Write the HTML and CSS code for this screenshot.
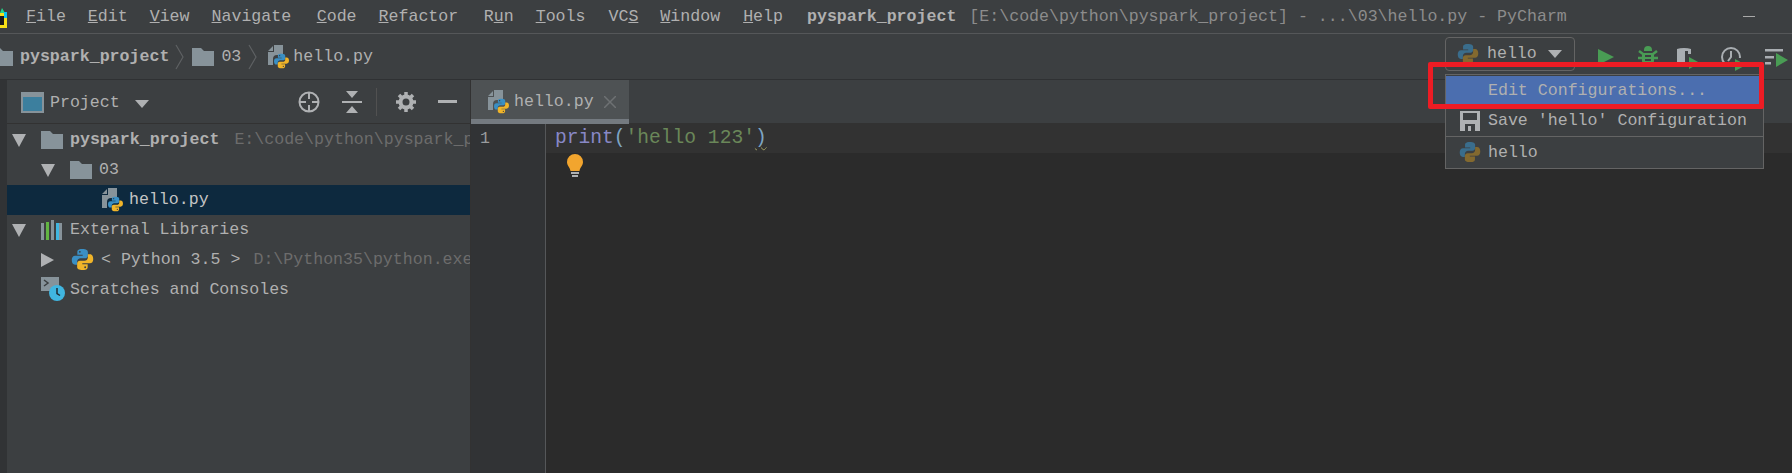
FILE: index.html
```html
<!DOCTYPE html>
<html lang="en">
<head>
<meta charset="utf-8">
<title>PyCharm</title>
<link rel="stylesheet" href="styles.css">
</head>
<body>
<svg class="defs" width="0" height="0" aria-hidden="true">
  <symbol id="py" viewBox="0 0 24 24">
    <path fill="#3a8fc4" d="M11.8 1C7 1 6.6 3 6.6 4.2V7h5.6v1H4.4C2 8 .8 9.8.8 12.6c0 3 1.300 4.800 3.400 4.800H6.400v-3.200c0-2 1.600-3.500 3.600-3.500h4.600c1.700 0 3-1.300 3-3V4.200C17.600 2.400 16 1 11.800 1z"/>
    <path fill="#f0b429" d="M12.200 23c4.800 0 5.200-2 5.200-3.200V17h-5.600v-1h7.800c2.400 0 3.600-1.800 3.600-4.600 0-3-1.300-4.800-3.400-4.800H17.600v3.200c0 2-1.600 3.500-3.600 3.500H9.400c-1.700 0-3 1.300-3 3v3.500C6.400 21.600 8 23 12.200 23z"/>
    <circle cx="9.200" cy="4" r="1" fill="#3c3f41"/><circle cx="14.800" cy="20" r="1" fill="#3c3f41"/>
  </symbol>
  <symbol id="pydim" viewBox="0 0 24 24">
    <path fill="#3a6d8c" d="M11.800 1C7 1 6.600 3 6.600 4.200V7h5.600v1H4.400C2 8 .8 9.800.8 12.600c0 3 1.300 4.800 3.400 4.800H6.400v-3.200c0-2 1.600-3.500 3.600-3.500h4.600c1.700 0 3-1.300 3-3V4.200C17.600 2.400 16 1 11.800 1z"/>
    <path fill="#83692f" d="M12.200 23c4.800 0 5.200-2 5.200-3.200V17h-5.600v-1h7.800c2.400 0 3.600-1.800 3.600-4.600 0-3-1.300-4.800-3.400-4.800H17.600v3.200c0 2-1.600 3.500-3.600 3.500H9.400c-1.700 0-3 1.300-3 3v3.500C6.400 21.600 8 23 12.200 23z"/>
  </symbol>
  <symbol id="folder" viewBox="0 0 22 18">
    <path fill="#87939a" d="M0 0h9l3 3h10v15H0z"/>
  </symbol>
  <symbol id="pyfile" viewBox="0 0 22 24">
    <path fill="#87939a" d="M6 0h9v10H9a4 4 0 0 0-4 4v6H0V7h6zM5 1v5H0z"/>
    <use href="#py" x="5" y="8" width="17" height="16"/>
  </symbol>
</svg>

<header class="menubar">
  <svg class="applogo" width="7" height="25" viewBox="0 0 7 25"><path fill="#f7e017" d="M0 9h7v15H0z"/><path fill="#1b1b1b" d="M0 12h4v9H0z"/><path fill="#21d789" d="M2 4l3 5H0z"/><path fill="#07c3f2" d="M4 8h3v6H4z"/></svg>
  <nav class="menus">
    <span><u>F</u>ile</span>
    <span><u>E</u>dit</span>
    <span><u>V</u>iew</span>
    <span class="long"><u>N</u>avigate</span>
    <span><u>C</u>ode</span>
    <span class="long"><u>R</u>efactor</span>
    <span>R<u>u</u>n</span>
    <span class="mid"><u>T</u>ools</span>
    <span>VC<u>S</u></span>
    <span class="mid"><u>W</u>indow</span>
    <span class="mid"><u>H</u>elp</span>
  </nav>
  <div class="title"><b>pyspark_project</b><span class="path">[E:\code\python\pyspark_project] - ...\03\hello.py - PyCharm</span></div>
  <i class="winmin"></i>
</header>

<div class="navbar">
  <div class="crumbs">
    <svg class="c-folder0" width="13" height="18"><use href="#folder" x="-9" width="22" height="18"/></svg>
    <b>pyspark_project</b>
    <svg class="chev" width="9" height="26" viewBox="0 0 9 26"><path fill="none" stroke="#5e6163" stroke-width="1.200" d="M1 1l7 12-7 12"/></svg>
    <svg width="22" height="18"><use href="#folder"/></svg>
    <span>03</span>
    <svg class="chev" width="9" height="26" viewBox="0 0 9 26"><path fill="none" stroke="#5e6163" stroke-width="1.200" d="M1 1l7 12-7 12"/></svg>
    <svg class="c-file" width="22" height="24"><use href="#pyfile"/></svg>
    <span>hello.py</span>
  </div>
  <div class="tools">
    <div class="runconfig">
      <svg width="22" height="22"><use href="#pydim"/></svg>
      <span>hello</span>
      <i class="tri-down"></i>
    </div>
    <svg class="t-run" width="16" height="16" viewBox="0 0 16 16"><path fill="#499c54" d="M0 0l16 8-16 8z"/></svg>
    <svg class="t-bug" width="20" height="22" viewBox="0 0 20 22"><path fill="none" stroke="#499c54" stroke-width="2.500" d="M1 5l4 3M19 5l-4 3M0 12h4M20 12h-4M2 20l3-3M18 20l-3-3"/><path fill="#499c54" d="M6 4a4 4 0 0 1 8 0v1H6zM4 7h12v8a6 6 0 0 1-12 0z"/><path fill="#3c3f41" d="M7 9h6v2H7zM7 13h6v2H7z"/></svg>
    <svg class="t-cov" width="24" height="26" viewBox="0 0 24 26"><path fill="#a9aeb2" d="M1 3a9 3 0 0 1 14 0v5h-3V5H9v13l-3 3-5-3z"/><path fill="#499c54" d="M13 11l11 6-11 6z"/></svg>
    <svg class="t-prof" width="26" height="26" viewBox="0 0 26 26"><circle cx="10" cy="11" r="9" fill="none" stroke="#a9aeb2" stroke-width="2"/><path fill="none" stroke="#a9aeb2" stroke-width="2" d="M10 5v6l-3 4"/><path fill="#3c3f41" d="M12 12h14v14H12z"/><path fill="#499c54" d="M14 13l11 6-11 6z"/></svg>
    <svg class="t-conc" width="23" height="20" viewBox="0 0 23 20"><path fill="#a9aeb2" d="M0 0h18v2.500H0zM0 7h9v2.500H0zM0 13h6v2.500H0z"/><path fill="#499c54" d="M11 4l12 7-12 7z"/></svg>
  </div>
</div>

<div class="workspace">
  <aside class="strip"></aside>
  <section class="project">
    <div class="phead">
      <svg class="p-icon" width="23" height="21" viewBox="0 0 23 21"><path fill="#87939a" d="M0 0h23v21H0z"/><path fill="#3c7f9e" d="M2 5h19v14H2z"/></svg>
      <span class="plabel">Project</span>
      <i class="tri-down"></i>
      <div class="phead-icons">
        <svg width="22" height="22" viewBox="0 0 22 22"><circle cx="11" cy="11" r="9.500" fill="none" stroke="#afb1b3" stroke-width="2"/><path stroke="#afb1b3" stroke-width="2" d="M11 1v7M11 14v7M1 11h7M14 11h7"/></svg>
        <svg class="collapse" width="20" height="22" viewBox="0 0 20 22"><path fill="#afb1b3" d="M0 10h20v2H0zM4 0h12l-6 7zM10 15l6 7H4z"/></svg>
        <i class="vsep"></i>
        <svg class="gear" width="20" height="20" viewBox="0 0 20 20"><circle cx="10" cy="10" r="5.500" fill="none" stroke="#afb1b3" stroke-width="4"/><path stroke="#afb1b3" stroke-width="3.500" d="M10 0v4M10 16v4M0 10h4M16 10h4M3 3l3 3M14 14l3 3M17 3l-3 3M6 14l-3 3"/></svg>
        <i class="pmin"></i>
      </div>
    </div>
    <ul class="tree">
      <li class="row lv0"><i class="tw-down"></i><svg width="22" height="18"><use href="#folder"/></svg><b>pyspark_project</b><span class="dim">E:\code\python\pyspark_p</span></li>
      <li class="row lv1"><i class="tw-down"></i><svg width="22" height="18"><use href="#folder"/></svg><span class="gap8">03</span></li>
      <li class="row lv2 selected"><svg width="22" height="24"><use href="#pyfile"/></svg><span>hello.py</span></li>
      <li class="row lv0"><i class="tw-down"></i><svg class="libs" width="22" height="20" viewBox="0 0 22 20"><path fill="#87939a" d="M0 3h3v17H0zM18 3h3v17h-3z"/><path fill="#62b543" d="M5 2h3v18H5z"/><path fill="#87939a" d="M10 0h3v20h-3z"/><path fill="#40b6e0" d="M15 3h3v17h-3z"/></svg><span>External Libraries</span></li>
      <li class="row lv1"><i class="tw-right"></i><svg class="py" width="23" height="23"><use href="#py"/></svg><span class="gap8">&lt; Python 3.5 &gt;</span><span class="dim">D:\Python35\python.exe</span></li>
      <li class="row lv0"><svg class="scratch" width="24" height="24" viewBox="0 0 24 24"><path fill="#87939a" d="M0 0h18v14H0z"/><path fill="none" stroke="#3c3f41" stroke-width="1.500" d="M3 3l4 3-4 3"/><circle cx="16" cy="16" r="8" fill="#40b6e0"/><path fill="none" stroke="#1f2a30" stroke-width="1.500" d="M16 11v5.500l3 2"/></svg><span class="s-label">Scratches and Consoles</span></li>
    </ul>
  </section>
  <section class="main">
    <div class="tabs">
      <div class="tab">
        <svg width="22" height="24"><use href="#pyfile"/></svg>
        <span>hello.py</span>
        <svg class="close" width="12" height="12" viewBox="0 0 12 12"><path stroke="#6e7173" stroke-width="1.500" d="M0 0l12 12M12 0L0 12"/></svg>
      </div>
    </div>
    <div class="editor">
      <div class="gutter">1</div>
      <div class="code">
        <div class="line"><span class="fn">print</span><span class="par">(</span><span class="str">'hello 123'</span><span class="par wavy">)</span></div>
        <svg class="bulb" width="16" height="25" viewBox="0 0 16 25"><path fill="#f2a52e" d="M8 0a8 8 0 0 1 8 8c0 3.500-3 5.500-3.500 9h-9C3 13.500 0 11.500 0 8a8 8 0 0 1 8-8z"/><path fill="#afb1b3" d="M4 18h8v2H4zM5 21h6v2H5z"/></svg>
      </div>
    </div>
  </section>
</div>

<div class="popup">
  <div class="pitem active"><span>Edit Configurations...</span></div>
  <div class="pitem"><svg width="20" height="20" viewBox="0 0 20 20"><path fill="#afb1b3" d="M0 0h20v20H0z"/><path fill="#3c3f41" d="M3 2h14v7H3zM5 13h10v7H5z"/><path fill="#afb1b3" d="M8 15h3v5H8z"/></svg><span>Save 'hello' Configuration</span></div>
  <div class="pitem sep"><svg width="22" height="22"><use href="#pydim"/></svg><span>hello</span></div>
</div>
<div class="redbox"></div>
</body>
</html>
```
FILE: styles.css
```css
* { box-sizing: border-box; }
html, body { margin: 0; padding: 0; height: 473px; overflow: hidden; background: #3c3f41; }
body {
  position: relative;
  display: flex;
  flex-direction: column;
  font-family: "Liberation Mono", monospace;
  font-size: 16.6px;
  color: #b0b0b0;
}
svg, i { flex: none; display: block; }
.defs { position: absolute; }
b { font-weight: 700; }

.menubar {
  height: 34px;
  flex: none;
  display: flex;
  align-items: center;
  border-bottom: 1px solid #555759;
  position: relative;
}
.menus { display: flex; margin-left: 19px; }
.menus span { margin-right: 22px; }
.menus .long { margin-right: 25.500px; }
.menus .mid { margin-right: 23px; }
.title { margin-left: 1px; }
.title .path { margin-left: 13px; color: #8c8c8c; }
.winmin { margin-left: auto; margin-right: 37px; width: 12px; height: 1px; background: #a9a9a9; }

.navbar {
  height: 46px;
  flex: none;
  display: flex;
  align-items: center;
  border-bottom: 1px solid #2f3133;
}
.crumbs { display: flex; align-items: center; gap: 7px; }
.crumbs b { margin-right: -1px; }
.chev { margin: 0 1px 0 0; }
.c-file { margin-left: 3px; margin-right: -4px; }
.tools { margin-left: auto; display: flex; align-items: center; margin-right: 4px; }
.runconfig {
  width: 130px;
  height: 34px;
  margin-top: -6px;
  border: 1px solid #646464;
  border-radius: 4px;
  display: flex;
  align-items: center;
  padding-left: 11px;
  gap: 8px;
}
.tri-down { width: 0; height: 0; border: 7px solid transparent; border-top: 8px solid #afb1b3; border-bottom: 0; }
.runconfig .tri-down { margin-left: 3px; }
.t-run { margin-left: 23px; }
.t-bug { margin-left: 24px; }
.t-cov { margin-left: 18px; margin-top: 4px; }
.t-prof { margin-left: 21px; margin-top: 4px; }
.t-conc { margin-left: 18px; margin-top: 4px; }

.workspace { flex: 1; display: flex; min-height: 0; }
.strip { width: 7px; flex: none; background: #313335; }
.project { width: 464px; flex: none; border-right: 1px solid #323232; display: flex; flex-direction: column; }
.phead { height: 44px; flex: none; display: flex; align-items: center; padding-left: 14px; padding-top: 2px; border-bottom: 1px solid #323232; }
.plabel { margin-left: 6px; margin-right: 15px; }
.phead .tri-down { margin-top: 2px; }
.phead-icons { margin-left: auto; margin-right: 13px; display: flex; align-items: center; gap: 22px; margin-top: -2px; }
.vsep { width: 1px; height: 28px; background: #515151; margin-left: -8px; margin-right: -3px; }
.pmin { width: 19px; height: 3px; background: #afb1b3; }

.tree { list-style: none; margin: 0; padding: 1px 0 0; overflow: hidden; }
.row { height: 30px; display: flex; align-items: center; white-space: nowrap; padding-bottom: 1px; }
.lv0 { padding-left: 5px; }
.lv1 { padding-left: 34px; }
.lv2 { padding-left: 95px; }
.selected { background: #0d293e; }
.tw-down { width: 0; height: 0; border: 7px solid transparent; border-top: 13px solid #afb1b3; border-bottom: 0; margin-right: 15px; margin-top: 1px; }
.tw-right { width: 0; height: 0; border: 7px solid transparent; border-left: 13px solid #afb1b3; border-right: 0; margin-right: 17px; margin-left: 0; }
.row b, .row > span:first-of-type { margin-left: 7px; }
.row .gap8 { margin-left: 8px; }
.selected span { margin-left: 5px !important; color: #c4c4c4; }
.row .dim { color: #6c6c6c; margin-left: 13px; flex: 1; min-width: 0; overflow: hidden; }
.row b + .dim { margin-left: 15px; }
.scratch { margin-left: 29px; margin-right: -2px; margin-top: -2px; }

.main { flex: 1; display: flex; flex-direction: column; min-width: 0; }
.tabs { height: 44px; flex: none; display: flex; border-bottom: 1px solid #323232; }
.tab {
  width: 158px;
  height: 44px;
  background: #4e5254;
  border-bottom: 5px solid #747a80;
  display: flex;
  align-items: center;
  padding-left: 17px;
  padding-top: 4px;
  gap: 4px;
}
.close { margin-left: 6px; }
.editor { flex: 1; display: flex; }
.gutter { width: 75px; flex: none; background: #313335; border-right: 1px solid #555759; padding: 5px 0 0 9px; height: 100%; color: #9a9c9e; }
.code { flex: 1; background: #2b2b2b; }
.line { height: 29px; background: #323232; padding: 3px 0 0 9px; font-size: 19.6px; }
.fn { color: #8888c6; }
.par { color: #7ea5c4; }
.str { color: #6a8759; }
.wavy { text-decoration: underline wavy #9e9e60 1px; text-underline-offset: 3px; }
.bulb { margin: 1px 0 0 21px; }

.popup {
  position: absolute;
  left: 1445px;
  top: 74px;
  width: 319px;
  height: 95px;
  background: #3c3f41;
  border: 1px solid #646464;
  padding-top: 1px;
}
.pitem { height: 30px; display: flex; align-items: center; padding-left: 42px; padding-bottom: 2px; position: relative; color: #b0b0b0; }
.pitem svg { position: absolute; left: 14px; top: 5px; }
.active { background: #4b6eaf; }
.sep { border-top: 1px solid #646464; height: 32px; padding-bottom: 0; }
.sep svg { left: 13px; top: 4px; }
.redbox {
  position: absolute;
  left: 1428px;
  top: 62px;
  width: 336px;
  height: 47px;
  border: 5px solid #ed1c24;
  border-radius: 2px;
}
```
